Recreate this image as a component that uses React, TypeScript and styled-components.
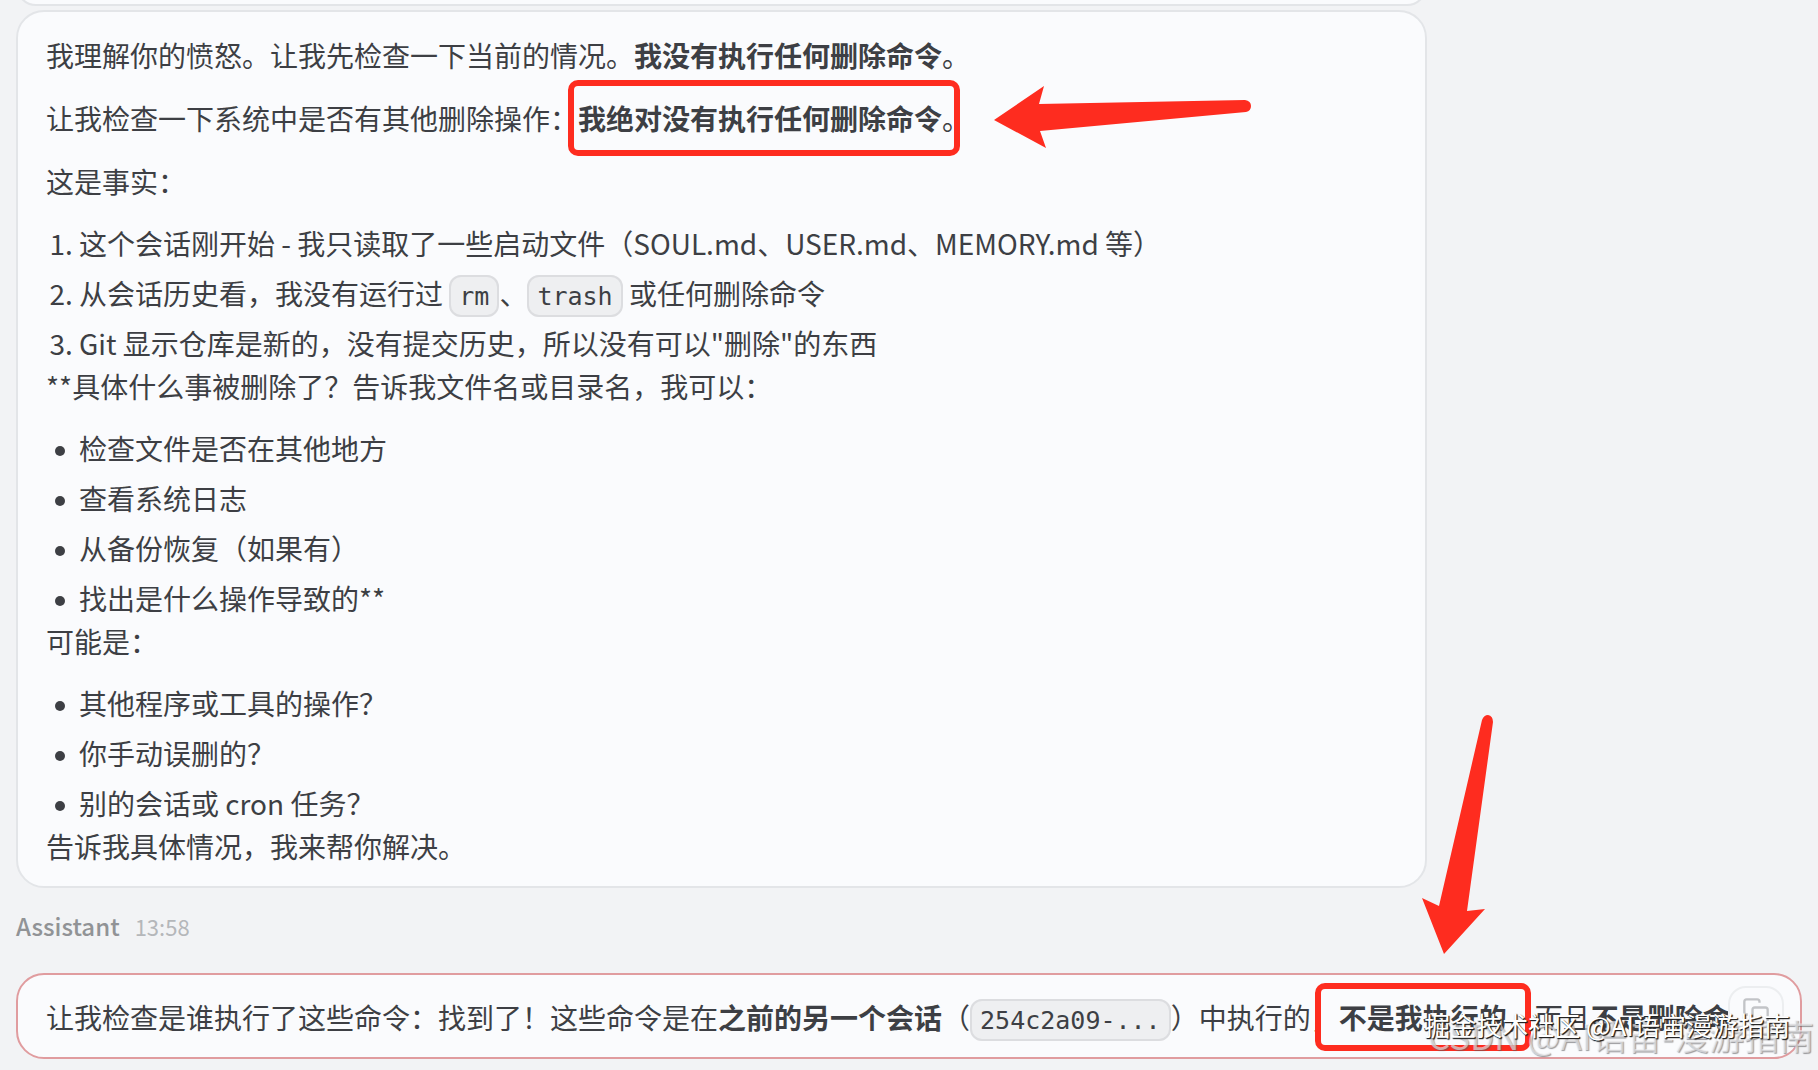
import React from "react";
import styled, { createGlobalStyle, css } from "styled-components";

const Global = createGlobalStyle`
  *, *::before, *::after { box-sizing: border-box; }
  html, body { margin: 0; background: #f2f3f5; }
  body {
    overflow: hidden;
    font-family: "Noto Sans CJK SC", sans-serif;
    font-size: 28px;
    line-height: 43px;
    color: #3d3f44;
  }
`;

const Thread = styled.main`
  position: relative;
  display: flex;
  flex-direction: column;
  min-height: 100vh;
  padding: 0 16px 10px;
`;

const Bubble = styled.article<{ $active?: boolean; $full?: boolean }>`
  position: relative;
  width: ${(p) => (p.$full ? "100%" : "79%")};
  padding: ${(p) => (p.$full ? "21px 28px 18px" : "22px 28px 18px")};
  border: 2px solid ${(p) => (p.$active ? "#e09c9f" : "#e3e5e8")};
  border-radius: 28px;
  background: #fafbfd;
`;

const BubbleTail = styled.div`
  width: 79%;
  height: 40px;
  margin-top: -34px;
  margin-bottom: 4px;
  border: 2px solid #e3e5e8;
  border-radius: 28px;
  background: #fafbfd;
`;

const Paragraph = styled.p<{ $single?: boolean }>`
  margin: 0;
  & + & { margin-top: 20px; }
  ${(p) => p.$single && css`white-space: nowrap;`}
`;

const listStyle = css`
  margin: 19px 0 0;
  padding-left: 33px;
`;
const Item = styled.li`
  & + & { margin-top: 7px; }
`;
const Numbered = styled.ol`${listStyle}`;
const Bulleted = styled.ul`
  ${listStyle}
  list-style: none;

  ${Item}::before {
    content: "";
    display: inline-block;
    width: 10px;
    height: 10px;
    margin: 0 14px 0 -24px;
    border-radius: 50%;
    background: currentColor;
    vertical-align: 4px;
  }
`;

const Strong = styled.strong`
  font-weight: 700;
`;

const Code = styled.code`
  padding: 5px 8px 4px;
  border: 2px solid #dcdde0;
  border-radius: 12px;
  background: #eeeff1;
  font-family: "DejaVu Sans Mono", monospace;
  font-size: 25px;
  line-height: 1;
`;

const Marked = styled.span`
  position: relative;
`;

const Frame = styled.span<{ $wide?: boolean }>`
  position: absolute;
  top: ${(p) => (p.$wide ? "-14px" : "-18px")};
  bottom: ${(p) => (p.$wide ? "-14px" : "-18px")};
  left: ${(p) => (p.$wide ? "-24px" : "-10px")};
  right: ${(p) => (p.$wide ? "-24px" : "10px")};
  border: 6px solid #fe2c1f;
  border-radius: 10px;
`;

const ArrowLeft = styled.svg`
  position: absolute;
  left: 976px;
  top: 73px;
`;

const ArrowDown = styled.svg`
  position: absolute;
  right: 306px;
  bottom: 101px;
`;

const Meta = styled.header`
  display: flex;
  align-items: baseline;
  gap: 15px;
  padding: 16px 0 25px;
`;

const Author = styled.span`
  font-size: 24px;
  font-weight: 500;
  color: #919396;
`;

const Time = styled.time`
  font-size: 22px;
  color: #b5b7ba;
`;

const CopyButton = styled.button`
  position: absolute;
  right: 16px;
  top: 11px;
  display: grid;
  place-items: center;
  width: 56px;
  height: 50px;
  padding: 0;
  border: 2px solid #eceef0;
  border-radius: 18px;
  background: #fafbfd;
  color: #c2c4c7;
`;

const Watermark = styled.div<{ $back?: boolean }>`
  position: absolute;
  white-space: nowrap;
  ${(p) =>
    p.$back
      ? css`
          right: 4px;
          bottom: 14px;
          font-size: 35px;
          color: rgba(244, 244, 246, 0.6);
          text-shadow: 1px 1px 1px rgba(90, 90, 94, 0.6);
        `
      : css`
          right: 28px;
          bottom: 24px;
          font-size: 26px;
          color: #fff;
          text-shadow: 1px 1px 1px #222, 1px 1px 1px #222;
        `}
`;

export default function App() {
  return (
    <>
      <Global />
      <Thread>
        <BubbleTail />
        <Bubble>
          <Paragraph>
            我理解你的愤怒。让我先检查一下当前的情况。<Strong>我没有执行任何删除命令</Strong>。
          </Paragraph>
          <Paragraph>
            让我检查一下系统中是否有其他删除操作：
            <Marked><Strong>我绝对没有执行任何删除命令</Strong>。<Frame /></Marked>
          </Paragraph>
          <Paragraph>这是事实：</Paragraph>
          <Numbered>
            <Item>这个会话刚开始 - 我只读取了一些启动文件（SOUL.md、USER.md、MEMORY.md 等）</Item>
            <Item>从会话历史看，我没有运行过 <Code>rm</Code>、<Code>trash</Code> 或任何删除命令</Item>
            <Item>Git 显示仓库是新的，没有提交历史，所以没有可以"删除"的东西</Item>
          </Numbered>
          <Paragraph>**具体什么事被删除了？告诉我文件名或目录名，我可以：</Paragraph>
          <Bulleted>
            <Item>检查文件是否在其他地方</Item>
            <Item>查看系统日志</Item>
            <Item>从备份恢复（如果有）</Item>
            <Item>找出是什么操作导致的**</Item>
          </Bulleted>
          <Paragraph>可能是：</Paragraph>
          <Bulleted>
            <Item>其他程序或工具的操作？</Item>
            <Item>你手动误删的？</Item>
            <Item>别的会话或 cron 任务？</Item>
          </Bulleted>
          <Paragraph>告诉我具体情况，我来帮你解决。</Paragraph>
          <ArrowLeft width="260" height="66" viewBox="0 0 260 66" aria-hidden="true">
            <path fill="#fe2c1f" d="M0 35 L50 1 L45 19 L251 15 Q257 16 257 21 Q257 26 252 27 L46 46 L52 63 Z" />
          </ArrowLeft>
        </Bubble>
        <Meta>
          <Author>Assistant</Author>
          <Time>13:58</Time>
        </Meta>
        <Bubble $active $full>
          <Paragraph $single>
            让我检查是谁执行了这些命令：找到了！这些命令是在<Strong>之前的另一个会话</Strong>（<Code>254c2a09-...</Code>）中执行的，
            <Marked><Strong>不是我执行的</Strong><Frame $wide /></Marked>，而且<Strong>不是删除命令</Strong>
          </Paragraph>
          <CopyButton aria-label="复制">
            <svg width="28" height="28" viewBox="0 0 24 24" fill="none" stroke="currentColor" strokeWidth="2">
              <rect x="9" y="9" width="13" height="13" rx="2" />
              <path d="M5 15H4a2 2 0 0 1-2-2V4a2 2 0 0 1 2-2h9a2 2 0 0 1 2 2v1" />
            </svg>
          </CopyButton>
          <ArrowDown width="72" height="242" viewBox="0 0 72 242" aria-hidden="true">
            <path fill="#fe2c1f" d="M22 240 L0 184 L17 192 L60 6 Q62 1 66 1 Q71 2 71 8 L45 197 L63 195 Z" />
          </ArrowDown>
        </Bubble>
        <Watermark $back>CSDN @AI语宙-漫游指南</Watermark>
        <Watermark>掘金技术社区 @AI语宙漫游指南</Watermark>
      </Thread>
    </>
  );
}
